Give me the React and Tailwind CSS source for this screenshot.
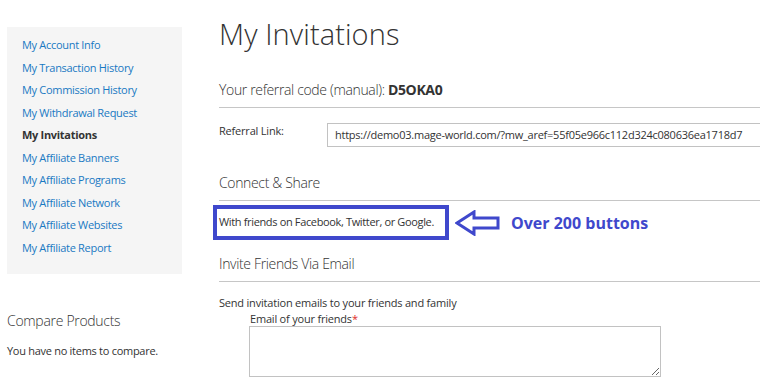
import React from 'react';

const links = [
    'My Account Info',
    'My Transaction History',
    'My Commission History',
    'My Withdrawal Request',
    'My Invitations',
    'My Affiliate Banners',
    'My Affiliate Programs',
    'My Affiliate Network',
    'My Affiliate Websites',
    'My Affiliate Report',
];

const SectionTitle = ({ children, className = '' }) => (
    <div className={`border-b border-[#c6c6c6] text-[14px] tracking-[-0.35px] font-light text-[#333] leading-[20px] pb-[7px] ${className}`}>
        {children}
    </div>
);

const App = () => {
    return (
        <div className="w-[760px] h-[389px] overflow-hidden bg-white text-[#333] font-['Open_Sans',sans-serif] flex">
            {/* Sidebar */}
            <div className="w-[175px] ml-[7px] shrink-0 flex flex-col">
                <ul className="mt-[27px] bg-[#f5f5f5] pt-[7px] pb-[15px] pl-[15px]">
                    {links.map(link => (
                        <li key={link} className="text-[11px] tracking-[-0.3px] leading-[22.5px]">
                            {link === 'My Invitations' ? (
                                <strong className="font-bold text-[#333]">{link}</strong>
                            ) : (
                                <a href="#" className="text-[#1979c3]">{link}</a>
                            )}
                        </li>
                    ))}
                </ul>
                <div className="mt-[37px] text-[14px] tracking-[-0.3px] font-light leading-[20px]">Compare Products</div>
                <div className="mt-[12px] text-[11px] tracking-[-0.28px] leading-[16px]">You have no items to compare.</div>
            </div>

            {/* Main */}
            <div className="ml-[37px] w-[600px] shrink-0 flex flex-col">
                <h1 className="mt-[16px] text-[29px] font-light leading-[36px] tracking-[0.1px]">My Invitations</h1>

                <SectionTitle className="mt-[28px]">
                    Your referral code (manual): <strong className="font-bold">D5OKA0</strong>
                </SectionTitle>

                <div className="mt-[15px] flex items-start">
                    <label className="w-[108px] text-[11px] tracking-[-0.2px] leading-[16px]">Referral Link:</label>
                    <div className="h-[24px] w-[480px] border border-[#c2c2c2] px-[7px] flex items-center text-[11px] tracking-[-0.25px] whitespace-nowrap">
                        https://demo03.mage-world.com/?mw_aref=55f05e966c112d324c080636ea1718d7
                    </div>
                </div>

                <SectionTitle className="mt-[26px]">Connect &amp; Share</SectionTitle>

                <div className="mt-[4px] ml-[-6px] flex items-center">
                    <div className="w-[236px] h-[35px] border-4 border-[#3f48cc] pl-[2px] flex items-center text-[11px] tracking-[-0.35px] whitespace-nowrap">
                        With friends on Facebook, Twitter, or Google.
                    </div>
                    <svg className="ml-[6px]" width="46" height="26" viewBox="0 0 46 26">
                        <path d="M2 13 L19 2 L19 8 L43 8 L43 18 L19 18 L19 24 Z" fill="white" stroke="#3f48cc" strokeWidth="3" strokeLinejoin="miter" />
                    </svg>
                    <span className="ml-[10px] text-[16px] font-bold text-[#3f48cc] leading-[20px]">Over 200 buttons</span>
                </div>

                <SectionTitle className="mt-[14px]">Invite Friends Via Email</SectionTitle>

                <div className="mt-[13px] text-[11px] tracking-[-0.2px] leading-[16px]">Send invitation emails to your friends and family</div>
                <div className="ml-[31px] text-[11px] tracking-[-0.2px] leading-[15px]">
                    Email of your friends<span className="text-[#e02b27]">*</span>
                </div>
                <textarea className="ml-[30px] w-[412px] h-[51px] border border-[#c2c2c2] resize-y" />
            </div>
        </div>
    );
};

export default App;
